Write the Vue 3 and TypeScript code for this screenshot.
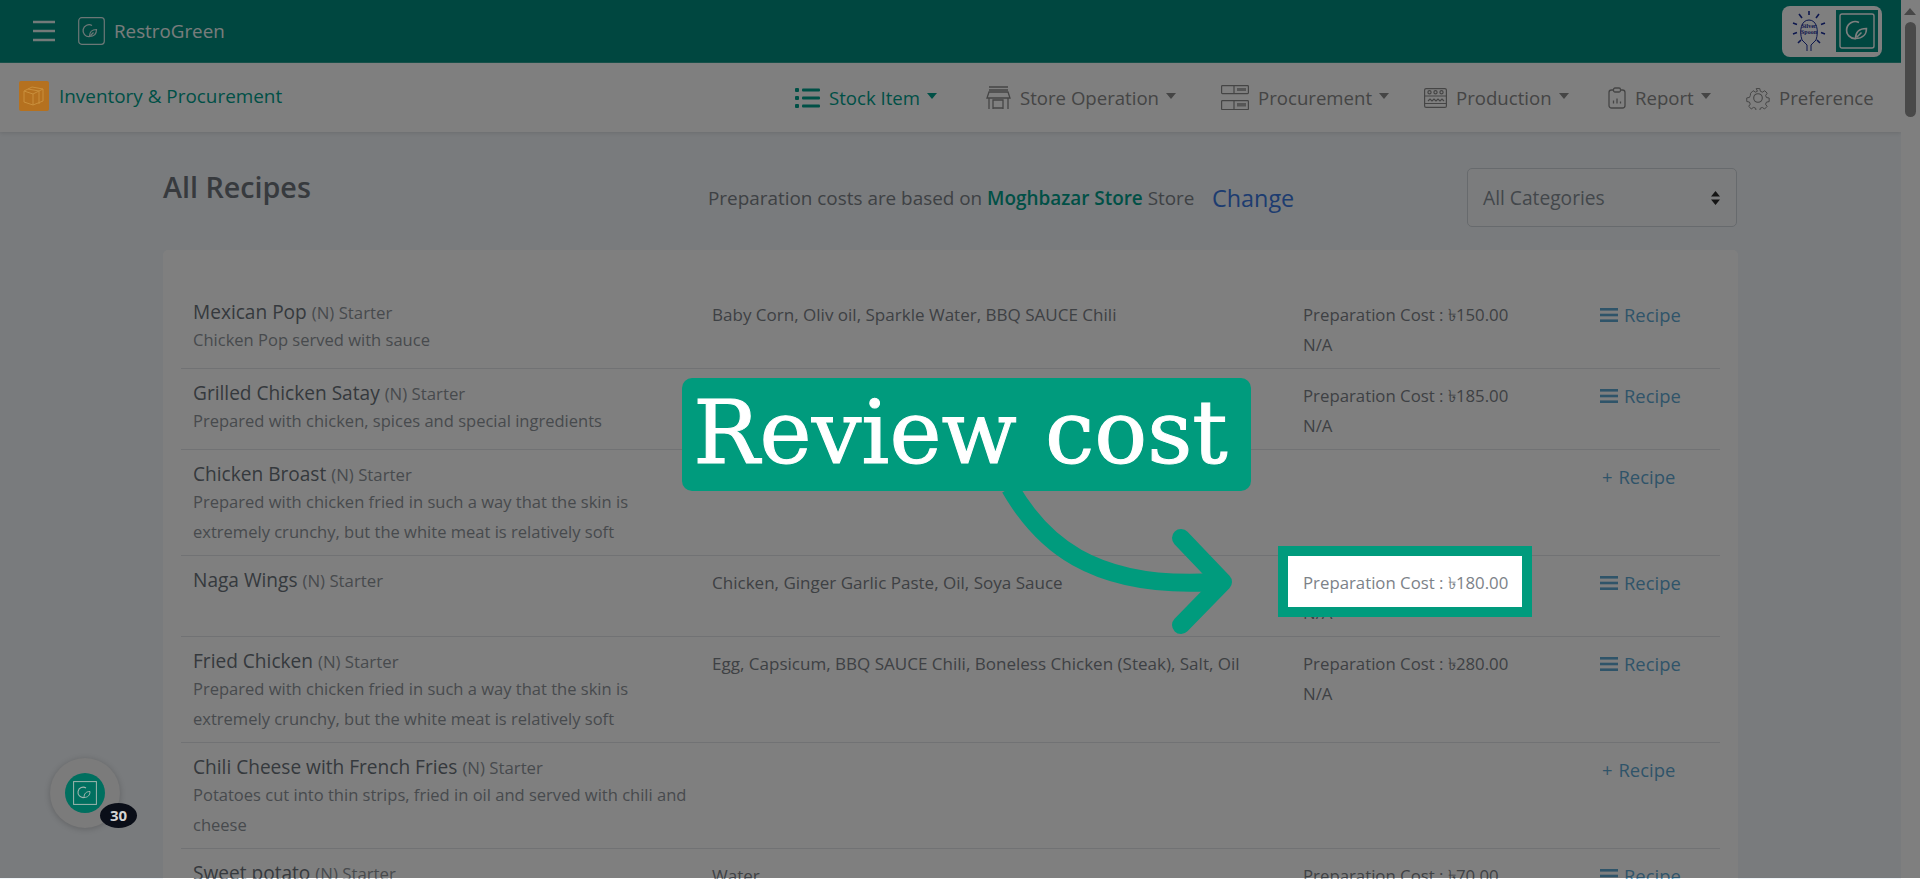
<script setup lang="ts">
// Recipe list behind a dimmed walkthrough step: the overlay punches a hole over one cost line.
interface Recipe {
  name: string
  desc?: string
  ingredients?: string
  cost?: string
  hasRecipe: boolean
}

const recipes: Recipe[] = [
  { name: 'Mexican Pop', desc: 'Chicken Pop served with sauce', ingredients: 'Baby Corn, Oliv oil, Sparkle Water, BBQ SAUCE Chili', cost: '150.00', hasRecipe: true },
  { name: 'Grilled Chicken Satay', desc: 'Prepared with chicken, spices and special ingredients', ingredients: 'Chicken, Spices', cost: '185.00', hasRecipe: true },
  { name: 'Chicken Broast', desc: 'Prepared with chicken fried in such a way that the skin is extremely crunchy, but the white meat is relatively soft', hasRecipe: false },
  { name: 'Naga Wings', ingredients: 'Chicken, Ginger Garlic Paste, Oil, Soya Sauce', cost: '180.00', hasRecipe: true },
  { name: 'Fried Chicken', desc: 'Prepared with chicken fried in such a way that the skin is extremely crunchy, but the white meat is relatively soft', ingredients: 'Egg, Capsicum, BBQ SAUCE Chili, Boneless Chicken (Steak), Salt, Oil', cost: '280.00', hasRecipe: true },
  { name: 'Chili Cheese with French Fries', desc: 'Potatoes cut into thin strips, fried in oil and served with chili and cheese', hasRecipe: false },
  { name: 'Sweet potato', ingredients: 'Water', cost: '70.00', hasRecipe: true },
]

const navItems = [
  { key: 'stock', label: 'Stock Item', caret: true },
  { key: 'store', label: 'Store Operation', caret: true },
  { key: 'proc', label: 'Procurement', caret: true },
  { key: 'prod', label: 'Production', caret: true },
  { key: 'report', label: 'Report', caret: true },
  { key: 'pref', label: 'Preference', caret: false },
]
</script>

<template>
  <div class="app">
    <div class="page">
      <header class="top">
        <svg class="burger" width="22" height="22" viewBox="0 0 22 22">
          <path d="M0 2h22M0 11h22M0 20h22" stroke="#fff" stroke-width="2.4" fill="none" />
        </svg>
        <svg class="brand-mark" width="27" height="28" viewBox="0 0 27 28" fill="none" stroke="#fff">
          <rect x=".7" y=".7" width="25.6" height="26.6" rx="3" stroke-width="1.2" />
          <path d="M14 8.5a6 6 0 1 0-2.500 11.200" stroke-width="1.300" />
          <path d="M11.500 19.500c0-4.500 2.500-7 7-7 0 4.500-2.500 7-7 7zM12.500 18.500l3-3" stroke-width="1.200" />
        </svg>
        <span class="brand">RestroGreen</span>
        <div class="logos">
          <svg class="bulb" width="34" height="42" viewBox="0 0 34 42" fill="none" stroke="#1b2f9c">
            <path d="M17 1v4M7 4l3 4M27 4l-3 4M1 13l4 1.500M33 13l-4 1.500M1 24l4-1.500M33 24l-4-1.500M6 33l3-3M28 33l-3-3" stroke-width="1.600" />
            <path d="M10 30c-3-9-1-20 7-20s10 11 7 20l-5 5v6M10 30l5 5v6" stroke-width="1" />
            <text x="17" y="18" text-anchor="middle" class="bulb-text">Silver</text>
            <text x="17" y="24" text-anchor="middle" class="bulb-text">Spoon</text>
          </svg>
          <div class="logo-green">
            <svg width="36" height="36" viewBox="0 0 36 36" fill="none" stroke="#fff">
              <rect x="1" y="1" width="34" height="34" rx="2" stroke-width="1.400" />
              <path d="M20 9.500a8.500 8.500 0 1 0-3 16" stroke-width="1.700" />
              <path d="M16.500 25.500c0-6 3.500-10 11-10 0 6-4 10-11 10zM18 24l4.500-4.500" stroke-width="1.500" />
            </svg>
          </div>
        </div>
      </header>

      <nav class="sub">
        <div class="module">
          <span class="module-icon">
            <svg width="30" height="30" viewBox="0 0 30 30" fill="none" stroke="#c98f3c" stroke-width="1">
              <path d="M5 10l8-4 11 2v12l-10 4-9-3zM9 8l11 2v13M5 10l9 3v11M14 13l10-5" />
            </svg>
          </span>
          <span class="module-name">Inventory &amp; Procurement</span>
        </div>
        <div class="nav">
          <div v-for="item in navItems" :key="item.key" class="nav-item" :class="{ active: item.key === 'stock' }">
            <svg v-if="item.key === 'stock'" class="ic" width="25" height="22" viewBox="0 0 25 22" fill="currentColor">
              <rect x="0" y="1" width="4" height="4" rx="1" />
              <rect x="0" y="9" width="4" height="4" rx="1" />
              <rect x="0" y="17" width="4" height="4" rx="1" />
              <rect x="7" y="1.500" width="18" height="3" rx="1" />
              <rect x="7" y="9.500" width="18" height="3" rx="1" />
              <rect x="7" y="17.500" width="18" height="3" rx="1" />
            </svg>
            <svg v-else-if="item.key === 'store'" class="ic" width="25" height="24" viewBox="0 0 25 24" fill="none" stroke="currentColor" stroke-width="1.300">
              <path d="M3 1h19M3 4h19M3 6L1 12h23l-2-6zM3 12v11M22 12v11M7 23v-9h10v9M7 22h10" />
            </svg>
            <svg v-else-if="item.key === 'proc'" class="ic" width="28" height="25" viewBox="0 0 28 25" fill="none" stroke="currentColor" stroke-width="1.200">
              <rect x=".6" y=".6" width="26.800" height="8" rx=".8" />
              <rect x=".6" y="15.600" width="26.800" height="9" rx=".8" />
              <path d="M13 1v7M13 16v8" />
              <rect x="16" y="3" width="9" height="3" fill="currentColor" stroke="none" opacity=".7" />
              <rect x="16" y="18" width="9" height="3.500" fill="currentColor" stroke="none" opacity=".7" />
            </svg>
            <svg v-else-if="item.key === 'prod'" class="ic" width="23" height="20" viewBox="0 0 23 20" fill="none" stroke="currentColor" stroke-width="1.200">
              <rect x=".6" y=".6" width="21.800" height="18.800" rx="1.500" />
              <path d="M1 8h21M1 15.500h21M4 13l2-2 2 2 2-2 2 2 2-2 2 2 2-2 2 2" />
              <circle cx="5.500" cy="4.300" r="1.600" />
              <circle cx="11.500" cy="4.300" r="1.600" />
              <circle cx="17.500" cy="4.300" r="1.600" />
            </svg>
            <svg v-else-if="item.key === 'report'" class="ic" width="18" height="22" viewBox="0 0 18 22" fill="none" stroke="currentColor" stroke-width="1.300">
              <rect x="1" y="3" width="16" height="18" rx="2.500" />
              <rect x="5.500" y="1" width="7" height="4" rx="1.500" fill="#fff" />
              <path d="M5.500 16.500v-3M9 16.500v-5M12.500 16.500v-2" />
            </svg>
            <svg v-else class="ic" width="24" height="24" viewBox="0 0 24 24" fill="none" stroke="currentColor" stroke-width="1.100">
              <circle cx="12" cy="12" r="4.300" />
              <path d="M10 1.500h4l.6 3 2.300 1 2.600-1.600 2.700 2.800-1.700 2.500.9 2.300 3 .5v4l-3 .6-1 2.300 1.700 2.500-2.800 2.800-2.500-1.700-2.300.9-.6 3h-4l-.5-3-2.300-1-2.600 1.700-2.800-2.800 1.700-2.500-.9-2.300-3-.6v-4l3-.5 1-2.300L3.800 6.700l2.800-2.800 2.500 1.600 2.300-1z" transform="translate(1.200 1.200) scale(.9)" />
            </svg>
            <span class="nav-label">{{ item.label }}</span>
            <i v-if="item.caret" class="caret"></i>
          </div>
        </div>
      </nav>

      <main class="content">
        <div class="head">
          <h1 class="title">All Recipes</h1>
          <p class="basis">Preparation costs are based on <b>Moghbazar Store</b> Store</p>
          <a class="change">Change</a>
          <div class="select">
            <span>All Categories</span>
            <svg width="9" height="14" viewBox="0 0 9 14" fill="#2b2b2b"><path d="M4.500 0L9 5.500H0zM4.500 14L0 8.500h9z" /></svg>
          </div>
        </div>

        <section class="card">
          <div v-for="r in recipes" :key="r.name" class="row">
            <div class="cell">
              <div class="name">{{ r.name }} <small>(N) Starter</small></div>
              <div v-if="r.desc" class="desc">{{ r.desc }}</div>
            </div>
            <div class="cell line ingredients">{{ r.ingredients }}</div>
            <div class="cell line">
              <template v-if="r.cost">
                <div>Preparation Cost : ৳{{ r.cost }}</div>
                <div>N/A</div>
              </template>
            </div>
            <div class="cell line link" :class="{ add: !r.hasRecipe }">
              <svg v-if="r.hasRecipe" width="18" height="14" viewBox="0 0 18 14" fill="currentColor">
                <rect y="0" width="18" height="2.600" />
                <rect y="5.700" width="18" height="2.600" />
                <rect y="11.400" width="18" height="2.600" />
              </svg>
              <span v-else class="plus">+</span>
              Recipe
            </div>
          </div>
        </section>
      </main>
    </div>

    <div class="scrollbar">
      <i class="sb-up"></i>
      <i class="sb-thumb"></i>
    </div>

    <!-- walkthrough layer -->
    <div class="dim"><div class="spot"></div></div>
    <svg class="pointer" width="260" height="160" viewBox="0 0 260 160" fill="none" stroke="#009b7d" stroke-width="18" stroke-linecap="round" stroke-linejoin="round">
      <path d="M10 -2C40 50 90 100 215 92" stroke-linecap="butt" />
      <path d="M181 48L223 92L181 135" />
    </svg>
    <div class="callout">Review cost</div>

    <div class="widget">
      <div class="widget-in">
        <svg width="24" height="24" viewBox="0 0 24 24" fill="none" stroke="#9fb5ae">
          <rect x=".6" y=".6" width="22.800" height="22.800" stroke-width="1" />
          <path d="M13 7a5.200 5.200 0 1 0-2 9.500" stroke-width="1.100" />
          <path d="M11 16.500c0-3.800 2-6 6-6 0 3.800-2.200 6-6 6z" stroke-width="1" />
        </svg>
      </div>
      <span class="badge">30</span>
    </div>
  </div>
</template>

<style scoped>
.app {
  position: relative;
  display: flex;
  width: 1920px;
  height: 879px;
  overflow: hidden;
  font-family: "Open Sans", "Noto Sans", "DejaVu Sans", sans-serif;
  color: #6c757d;
}
.page { flex: 1; min-width: 0; background: #f2f6fa; }

.top {
  display: flex;
  align-items: center;
  height: 62px;
  padding-left: 33px;
  background: #008f81;
  border-bottom: 1px solid #2fa598;
  box-sizing: content-box;
}
.burger { margin-right: 23px; opacity: .9; }
.brand-mark { margin-right: 9px; opacity: .85; }
.brand { font-size: 18.800px; font-weight: 500; color: #fff; opacity: .95; }
.logos {
  display: flex;
  align-items: center;
  margin-left: auto;
  margin-right: 19px;
  width: 100px;
  height: 51px;
  box-sizing: border-box;
  padding-left: 10px;
  background: #fff;
  border-radius: 8px;
}
.bulb-text { font-family: "Liberation Serif", serif; font-size: 6px; font-weight: 700; fill: #1b2f9c; stroke: none; }
.logo-green {
  display: flex;
  align-items: center;
  justify-content: center;
  width: 42px;
  height: 42px;
  margin-left: 10px;
  background: #008f81;
}

.sub {
  display: flex;
  align-items: center;
  height: 69px;
  padding: 0 28px 0 19px;
  background: #fff;
  box-shadow: 0 1px 4px rgba(0, 0, 0, .12);
  position: relative;
}
.module { display: flex; align-items: center; margin-top: -3px; }
.module-icon {
  position: relative;
  z-index: 12;
  display: flex;
  width: 30px;
  height: 30px;
  margin-right: 10px;
  background: #b5711f;
  border-radius: 2px;
}
.module-name { font-size: 18.900px; color: #00a08d; }
.nav {
  display: grid;
  grid-template-columns: 191px 235px 203px 184px 138px 127px;
  margin-left: auto;
}
.nav-item { display: flex; align-items: center; color: #8a8a8a; font-size: 18.600px; white-space: nowrap; }
.nav-item.active { color: #00a08d; }
.ic { margin-right: 9px; flex: none; }
.caret {
  margin-left: 7px;
  margin-top: -4px;
  border: 5.500px solid transparent;
  border-top: 6px solid currentColor;
  border-bottom: 0;
}

.content { padding: 35px 163px 0; }
.head { display: flex; align-items: flex-start; height: 62px; }
.title { margin: 0; width: 545px; font-size: 28.700px; font-weight: 600; color: #6e757c; }
.basis { margin: 18px 0 0; width: 504px; font-size: 18.900px; color: #7d8389; white-space: nowrap; }
.basis b { font-weight: 600; color: #00a08d; }
.change { margin-top: 15px; font-size: 23.400px; color: #3a78e0; }
.select {
  display: flex;
  align-items: center;
  justify-content: space-between;
  position: absolute;
  left: 1467px;
  top: 168px;
  width: 270px;
  height: 59px;
  box-sizing: border-box;
  padding: 0 16px 0 15px;
  font-size: 19.200px;
  color: #868e96;
  background: #f7f9fb;
  border: 1px solid #ced4da;
  border-radius: 5px;
}

.card { margin-top: 21px; padding: 38px 18px 0; background: #fff; border-radius: 5px; height: 640px; }
.row {
  display: grid;
  grid-template-columns: 519px 591px 297px 1fr;
  padding-bottom: 8px;
  border-bottom: 1px solid #e2e5e8;
}
.cell { padding: 12px 12px 0; box-sizing: border-box; min-width: 0; }
.name { font-size: 19.100px; line-height: 25px; color: #6b737b; }
.name small { font-size: 16.800px; color: #8f959b; }
.desc { font-size: 16.550px; line-height: 30px; color: #8f959b; }
.line { font-size: 16.800px; line-height: 30px; color: #7c8288; }
.ingredients { font-size: 17.050px; }
.link { display: flex; align-items: flex-start; gap: 6px; font-size: 18.400px; color: #5fa8d3; }
.link svg { margin-top: 8px; }
.link.add { padding-left: 14px; }

.scrollbar { position: relative; width: 19px; flex: none; background: #fff; }
.sb-up {
  position: absolute;
  left: 3px;
  top: 8px;
  border: 6.500px solid transparent;
  border-bottom: 7px solid #8f8f8f;
  border-top: 0;
}
.sb-thumb {
  position: absolute;
  left: 4px;
  top: 22px;
  width: 11px;
  height: 95px;
  background: #939393;
  border-radius: 6px;
}

.dim { position: absolute; left: 0; top: 0; right: 0; height: 878px; overflow: hidden; z-index: 10; pointer-events: none; }
.spot {
  position: absolute;
  left: 1288px;
  top: 556px;
  width: 234px;
  height: 51px;
  box-shadow: 0 0 0 10px #009b7d, 0 0 0 2000px rgba(0, 0, 0, .5);
}
.pointer { position: absolute; left: 1000px; top: 490px; z-index: 11; overflow: visible; }
.callout {
  position: absolute;
  left: 682px;
  top: 378px;
  z-index: 12;
  width: 569px;
  height: 113px;
  box-sizing: border-box;
  padding: 0 12px 4px 0;
  display: flex;
  align-items: center;
  justify-content: center;
  background: #009b7d;
  border-radius: 10px;
  color: #fff;
  font-family: "DejaVu Serif", serif;
  font-size: 88px;
  line-height: 1;
  -webkit-text-stroke: 1px #fff;
}

.widget {
  position: absolute;
  left: 50px;
  top: 758px;
  z-index: 12;
  display: flex;
  align-items: center;
  justify-content: center;
  width: 70px;
  height: 70px;
  background: #7b7b7b;
  border-radius: 50%;
  box-shadow: 0 1px 6px rgba(0, 0, 0, .2);
}
.widget-in {
  display: flex;
  align-items: center;
  justify-content: center;
  width: 40px;
  height: 40px;
  background: #006f5f;
  border-radius: 50%;
}
.badge {
  position: absolute;
  left: 50px;
  top: 45px;
  width: 37px;
  height: 25px;
  border-radius: 50%;
  background: #0a0e18;
  color: #d4d4d4;
  font-size: 15px;
  font-weight: 700;
  line-height: 25px;
  text-align: center;
}
</style>

<style>
html, body { margin: 0; overflow: hidden; }
</style>
